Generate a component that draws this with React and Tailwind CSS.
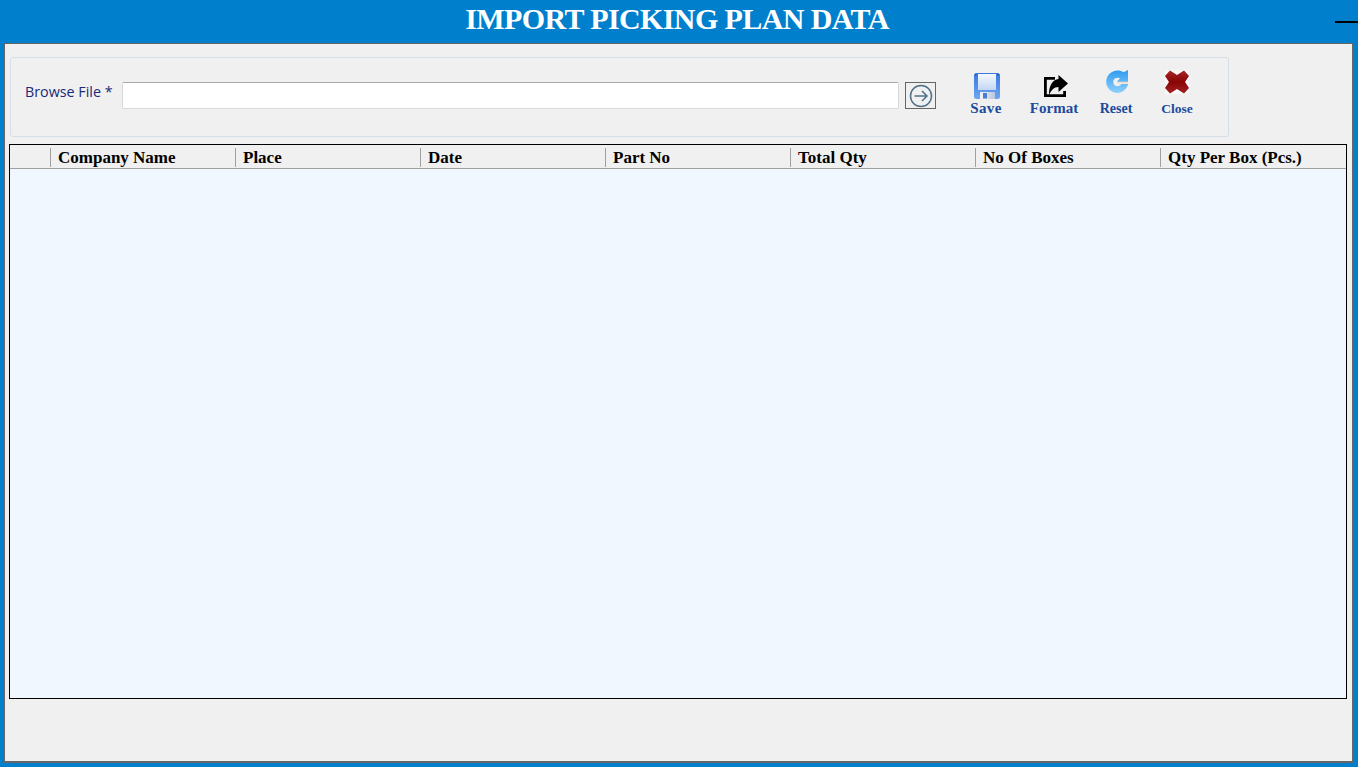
import React from 'react';

const serif = "font-['Liberation_Serif',serif]";

const columns = ['Company Name', 'Place', 'Date', 'Part No', 'Total Qty', 'No Of Boxes', 'Qty Per Box (Pcs.)'];

const SaveIcon = () => (
  <svg width="32" height="32" viewBox="0 0 32 32">
    <defs>
      <linearGradient id="saveBody" x1="0" y1="0" x2="0" y2="1">
        <stop offset="0" stopColor="#3a78dc" />
        <stop offset="1" stopColor="#6da6f2" />
      </linearGradient>
      <linearGradient id="saveLabel" x1="0" y1="0" x2="0" y2="1">
        <stop offset="0" stopColor="#f6f8fd" />
        <stop offset="1" stopColor="#c4d6f5" />
      </linearGradient>
      <linearGradient id="saveSlide" x1="0" y1="0" x2="1" y2="0">
        <stop offset="0" stopColor="#f2f4f8" />
        <stop offset="1" stopColor="#b9c6dc" />
      </linearGradient>
    </defs>
    <rect x="4" y="4" width="26" height="26" rx="2.500" fill="url(#saveBody)" />
    <rect x="8" y="5" width="18" height="16" fill="url(#saveLabel)" />
    <rect x="10" y="23" width="15" height="7" fill="url(#saveSlide)" />
    <rect x="13" y="24" width="4" height="5.500" fill="#4a7fd0" />
    <circle cx="5.800" cy="5.800" r="0.800" fill="#1f4fa8" />
    <circle cx="28.200" cy="5.800" r="0.800" fill="#1f4fa8" />
  </svg>
);

const FormatIcon = () => (
  <svg width="32" height="32" viewBox="0 0 32 32">
    <path d="M17 9.400H7.400v17.200h19.200V22" fill="none" stroke="#000" strokeWidth="2.800" />
    <path d="M20.500 6l9.500 8.500-9.500 8.500v-5c-4.500 0-7.500 3-9.500 8.500-.5-9 3.500-16 9.500-16.500z" fill="#000" />
  </svg>
);

const ResetIcon = () => (
  <svg width="32" height="32" viewBox="0 0 32 32">
    <defs>
      <linearGradient id="resetBody" x1="0" y1="0" x2="0" y2="1">
        <stop offset="0" stopColor="#2f9bf0" />
        <stop offset="1" stopColor="#8fd0fa" />
      </linearGradient>
    </defs>
    <g transform="translate(1.500 0)">
      <path
        d="M16 1.500c2.400 0 4.400.6 6 1.700L26.500 1v11.800H15.200l3.300-3.400c-.8-.5-1.600-.7-2.500-.7-2.400 0-4.300 1.900-4.300 4.300s1.900 4.300 4.300 4.300c1.700 0 3-.9 3.800-2.200h6.900C25 20.500 20.900 24 16 24 9.800 24 4.700 19 4.700 12.800S9.800 1.500 16 1.500z"
        fill="url(#resetBody)"
      />
      <rect x="16" y="13" width="10.500" height="1.400" fill="#f4d9c8" />
    </g>
  </svg>
);

const CloseIcon = () => (
  <svg width="32" height="32" viewBox="0 0 32 32">
    <defs>
      <linearGradient id="closeBody" x1="0" y1="0" x2="0" y2="1">
        <stop offset="0" stopColor="#a82525" />
        <stop offset="0.5" stopColor="#8a0505" />
        <stop offset="1" stopColor="#a02222" />
      </linearGradient>
    </defs>
    <rect x="4" y="1" width="24" height="24" fill="#f8f8f8" />
    <path d="M9 1.500L16 6l7-4.500 5 5.500-4 6 4 6-5 5.500-7-4.500-7 4.500L4 19l4-6-4-6z" fill="url(#closeBody)" />
  </svg>
);

const tools = [
  { label: 'Save', icon: <SaveIcon />, width: 'w-[72px]', text: 'text-[15px] tracking-[0.4px] mt-[-1px]' },
  { label: 'Format', icon: <FormatIcon />, width: 'w-[64px]', text: 'text-[15px] mt-[-1px]' },
  { label: 'Reset', icon: <ResetIcon />, width: 'w-[60px]', text: 'text-[14px] mt-0' },
  { label: 'Close', icon: <CloseIcon />, width: 'w-[62px]', text: 'text-[13.5px] mt-0' },
];

export default function App() {
  return (
    <div className="h-[767px] w-[1358px] overflow-hidden bg-[#0080cc] flex flex-col">
      <header className="relative h-[43px] shrink-0 flex items-center justify-center">
        <h1 className={`${serif} text-[30px] tracking-[-0.6px] font-bold text-white leading-none pb-[6px] pr-[4px]`}>IMPORT PICKING PLAN DATA</h1>
        <div className="absolute right-0 top-[21px] h-[2px] w-[23px] bg-black" />
      </header>

      <main className="ml-1 mr-1 h-[720px] w-[1350px] border-t border-r-2 border-l border-b-2 border-[#666] bg-[#f0f0f0] pt-[13px] pl-[4px]">
        <section className="ml-[1px] h-[80px] w-[1219px] rounded-[3px] border border-[#d5dee6] flex items-start">
          <label className="ml-[14px] mt-[25px] w-[97px] font-['Open_Sans',sans-serif] text-[14.3px] leading-[18px] text-[#1a2a78] whitespace-nowrap">
            Browse File *
          </label>
          <input
            type="text"
            className="mt-[24px] h-[27px] w-[777px] rounded-[2px] border border-[#d8d8d8] border-t-[#a9a9a9] bg-white outline-none"
          />
          <button className="ml-[6px] mt-[24px] h-[27px] w-[31px] border border-[#666] bg-[#f0f0f0] flex items-center justify-center">
            <svg width="24" height="24" viewBox="0 0 24 24" fill="none" stroke="#4f7288" strokeWidth="1.500">
              <circle cx="12" cy="12" r="10.500" />
              <path d="M5.500 12h12.500M13 7l5 5-5 5" />
            </svg>
          </button>
          <div className="ml-[14px] mt-[11px] flex">
            {tools.map((tool) => (
              <button key={tool.label} className={`${tool.width} flex flex-col items-center`}>
                {tool.icon}
                <span className={`${serif} ${tool.text} font-bold leading-[16px] text-[#1c4a9c]`}>{tool.label}</span>
              </button>
            ))}
          </div>
        </section>

        <section className="mt-[7px] h-[555px] w-[1338px] border border-black bg-[#f0f7fe]">
          <div className="h-[24px] bg-[#f0f0f0] border-b border-[#a0a0a0] flex items-stretch">
            <div className="w-[40px] shrink-0" />
            {columns.map((name) => (
              <div key={name} className="w-[185px] shrink-0 flex pb-[1px] pt-[3px]">
                <div className="w-px bg-[#a0a0a0]" />
                <span className={`${serif} pl-[7px] text-[17px] font-bold leading-[19px] text-black whitespace-nowrap`}>{name}</span>
              </div>
            ))}
          </div>
        </section>
      </main>
    </div>
  );
}
